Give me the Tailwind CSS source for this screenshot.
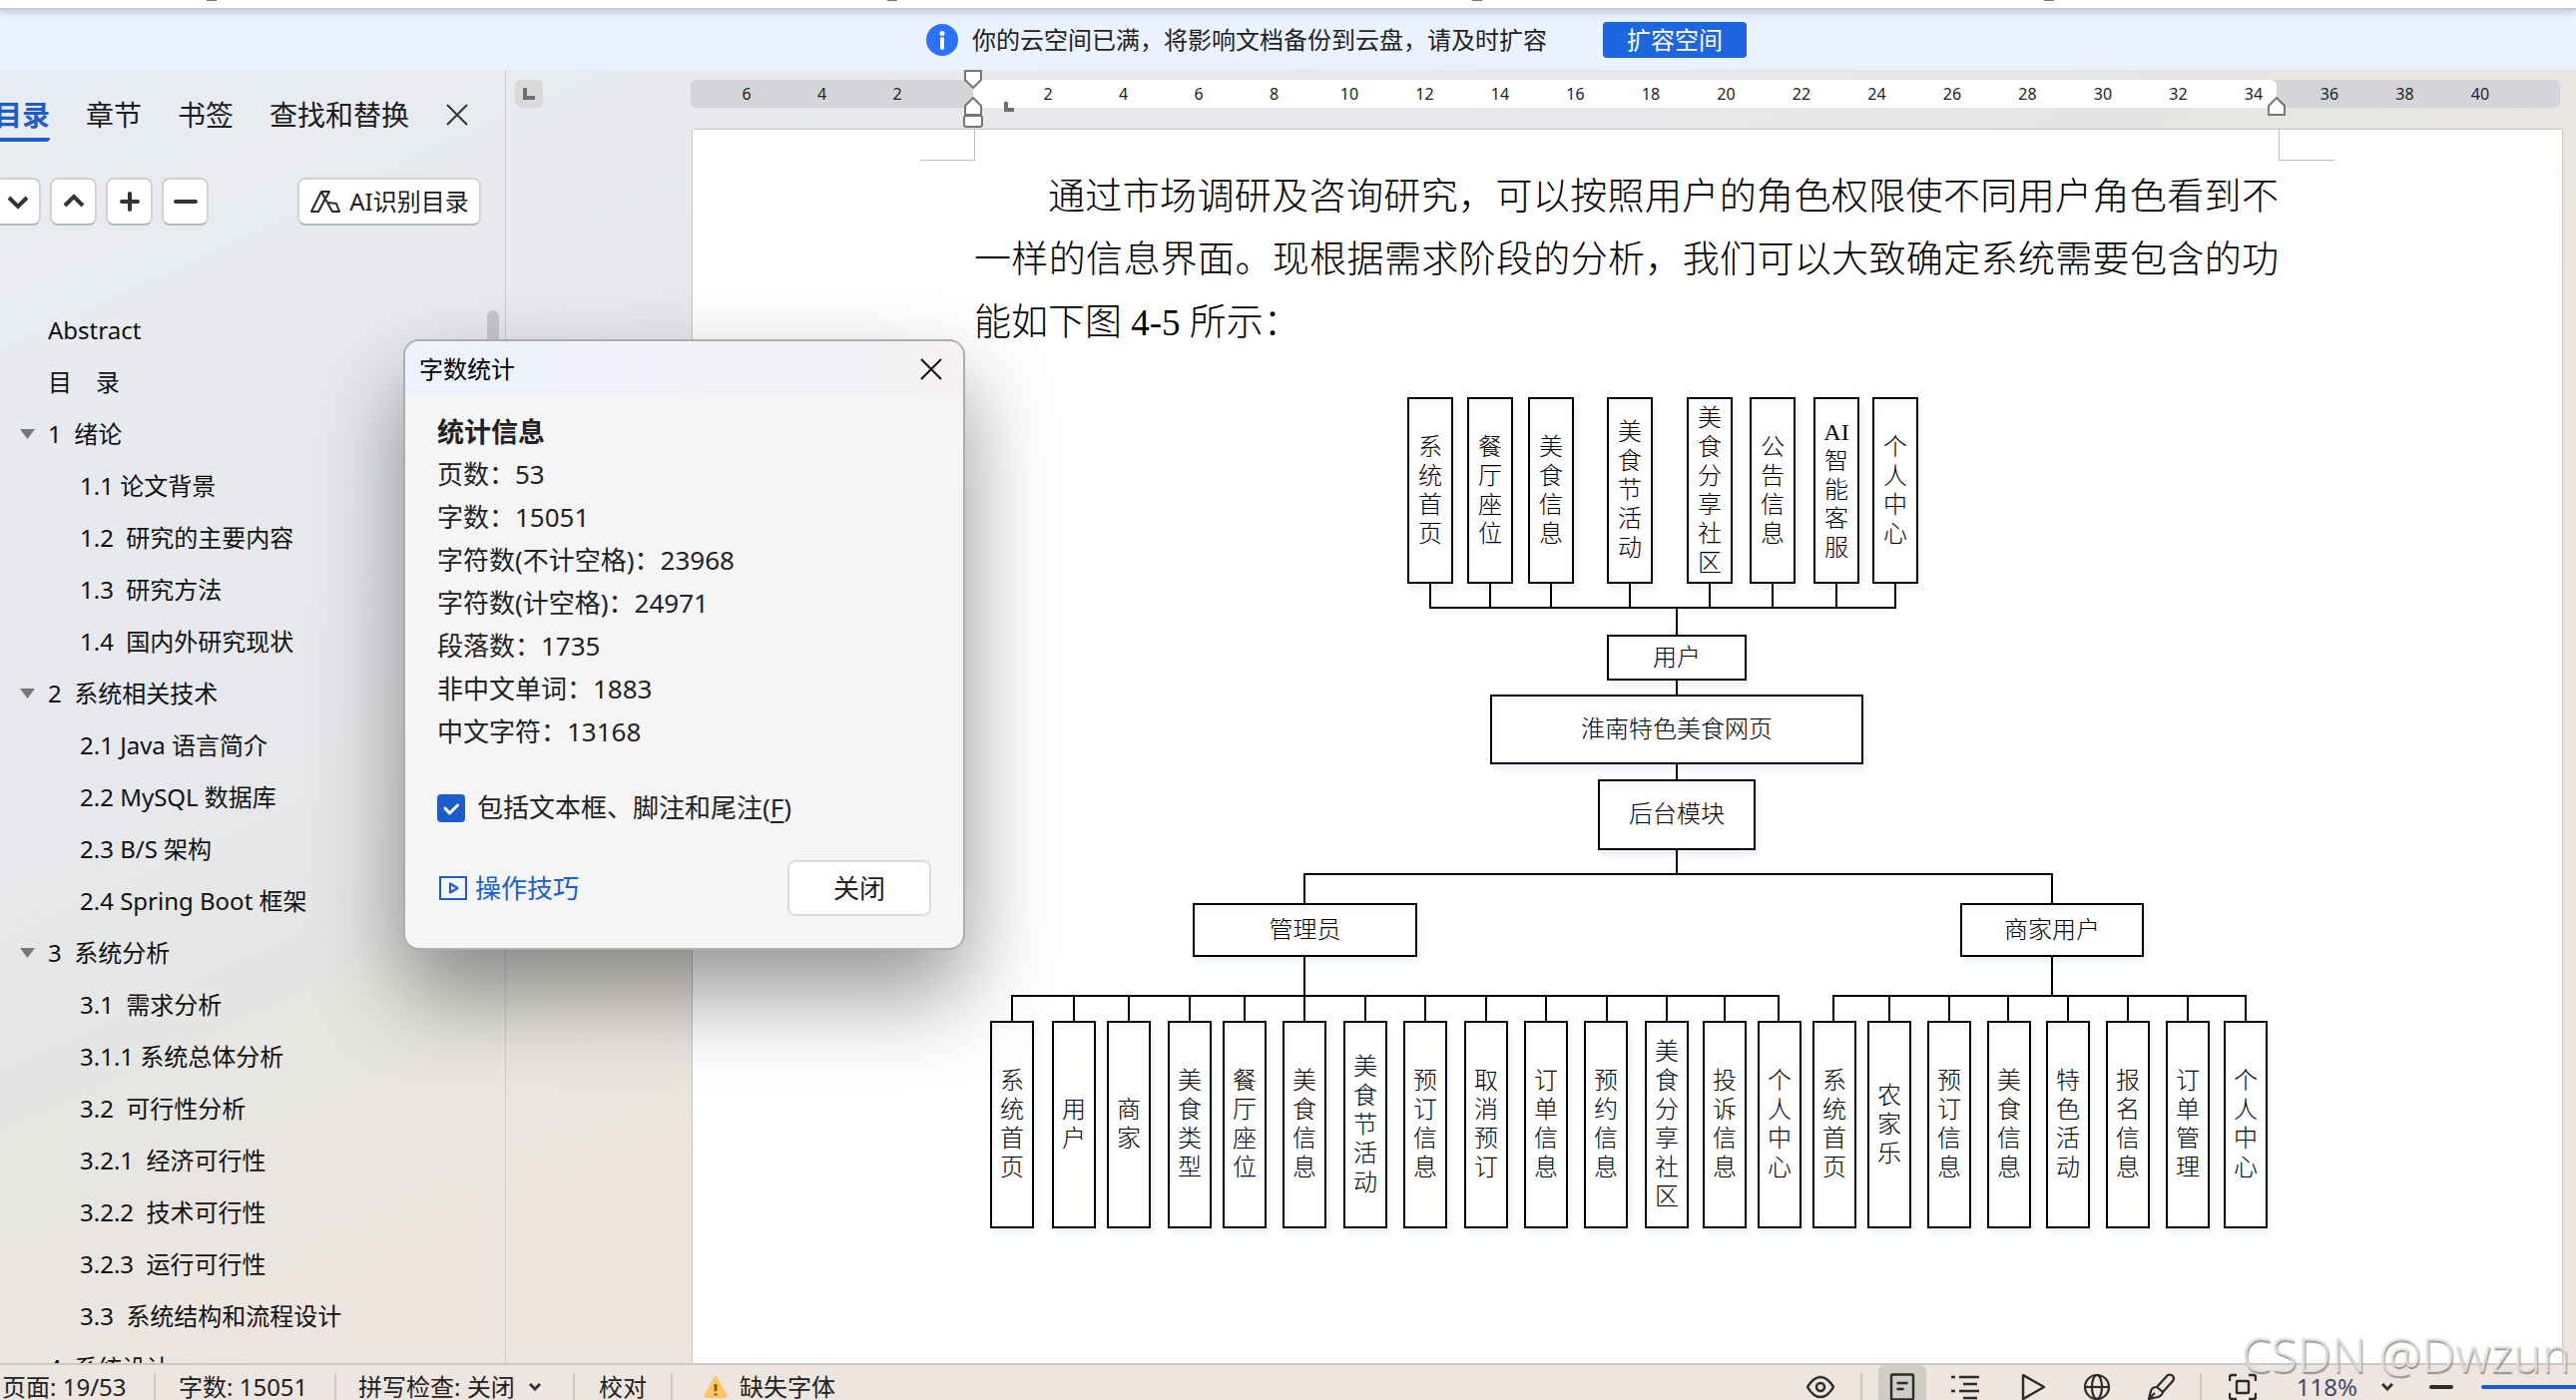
<!DOCTYPE html>
<html lang="zh-CN">
<head>
    <meta charset="UTF-8">
    <meta name="viewport" content="width=device-width, initial-scale=1.0">
    <title>字数统计</title>
    <script src="https://cdn.jsdelivr.net/npm/@tailwindcss/browser@4"></script>
</head>
<body class="font-['Noto_Sans','Noto_Sans_CJK_SC',sans-serif] text-2xl text-[#1c1c1e]">
    <div class="relative flex h-screen flex-col overflow-hidden bg-[linear-gradient(155deg,#e9ecf2_0%,#e6e8eb_33%,#e5e6e3_43%,#ede5df_57%,#eee5df_100%)]">

        <!-- Bottom edge of the ribbon -->
        <div class="z-10 flex h-[10px] shrink-0 items-start border-b-2 border-[#c9cbcf] bg-white pl-[207px] shadow-[0_2px_8px_rgba(80,100,140,0.3)]">
            <span class="h-px w-[10px] bg-[#777]"></span>
            <span class="ml-[672px] h-px w-[10px] bg-[#777]"></span>
            <span class="ml-[576px] h-px w-[10px] bg-[#777]"></span>
            <span class="ml-[563px] h-px w-[10px] bg-[#777]"></span>
        </div>

        <!-- Cloud notice -->
        <div class="flex h-[60px] shrink-0 items-center justify-center bg-[#ebf2ff] pl-[97px] text-[#222]">
            <svg class="size-8" viewBox="0 0 32 32">
                <circle cx="16" cy="16" r="16" fill="#2b72fb"/>
                <circle cx="16" cy="9.500" r="2.500" fill="#fff"/>
                <path d="M16 15v9" stroke="#fff" stroke-width="4" stroke-linecap="round"/>
            </svg>
            <p class="ml-[14px]">你的云空间已满，将影响文档备份到云盘，请及时扩容</p>
            <button type="button" class="ml-14 h-9 w-36 rounded bg-[#1e66e0] leading-9 text-white">扩容空间</button>
        </div>

        <main class="flex min-h-0 flex-1">
            <!-- Outline panel -->
            <aside class="relative flex w-[507px] shrink-0 flex-col overflow-hidden border-r border-[#cbcdd1]">
                <nav class="mt-6 -ml-[6px] flex items-start gap-9 text-[28px] leading-[42px]">
                    <a href="#toc" class="rounded-b-sm border-b-4 border-[#1d5dcb] pb-[2px] font-bold text-[#1d5dcb]">目录</a>
                    <a href="#chapter">章节</a>
                    <a href="#bookmark">书签</a>
                    <a href="#find">查找和替换</a>
                    <button type="button" aria-label="关闭目录" class="flex h-[42px] items-center">
                        <svg class="size-6" viewBox="0 0 24 24" fill="none" stroke="#333" stroke-width="2"><path d="M2 2l20 20M22 2L2 22"/></svg>
                    </button>
                </nav>

                <div class="mt-9 mr-6 -ml-[6px] flex gap-[9px]">
                    <button type="button" aria-label="展开" class="flex h-12 w-[47px] items-center justify-center rounded-lg border-2 border-[#d0d2d6] border-b-[#b4b6b9] bg-white">
                        <svg class="size-6" viewBox="0 0 24 24" fill="none" stroke="#333" stroke-width="4"><path d="M3 8l9 9 9-9"/></svg>
                    </button>
                    <button type="button" aria-label="收起" class="flex h-12 w-[47px] items-center justify-center rounded-lg border-2 border-[#d0d2d6] border-b-[#b4b6b9] bg-white">
                        <svg class="size-6" viewBox="0 0 24 24" fill="none" stroke="#333" stroke-width="4"><path d="M3 16l9-9 9 9"/></svg>
                    </button>
                    <button type="button" aria-label="增加级别" class="flex h-12 w-[47px] items-center justify-center rounded-lg border-2 border-[#d0d2d6] border-b-[#b4b6b9] bg-white">
                        <svg class="size-6" viewBox="0 0 24 24" fill="none" stroke="#333" stroke-width="4" stroke-linecap="round"><path d="M12 4v16M4 12h16"/></svg>
                    </button>
                    <button type="button" aria-label="减少级别" class="flex h-12 w-[47px] items-center justify-center rounded-lg border-2 border-[#d0d2d6] border-b-[#b4b6b9] bg-white">
                        <svg class="size-6" viewBox="0 0 24 24" fill="none" stroke="#333" stroke-width="4" stroke-linecap="round"><path d="M2 12h20"/></svg>
                    </button>
                    <button type="button" class="ml-auto flex h-12 w-[184px] items-center justify-center gap-2 rounded-lg border-2 border-[#d0d2d6] border-b-[#b4b6b9] bg-white whitespace-nowrap">
                        <svg class="h-6 w-8 shrink-0" viewBox="0 0 32 24" fill="none" stroke="#2a2a2a" stroke-width="2" stroke-linejoin="round"><path d="M12 2h8L9 22H2zM12 2l11 20h7l-3-8-8-1M14 12l6-10"/></svg>
                        AI识别目录
                    </button>
                </div>

                <ul class="mt-[79px] min-h-0 flex-1 overflow-hidden leading-[52px] text-[#111] *:whitespace-pre">
                    <li class="h-[52px] pl-12">Abstract</li>
                    <li class="h-[52px] pl-12">目　录</li>
                    <li class="flex h-[52px] items-center pl-5"><svg class="mr-[13px] h-[10px] w-[15px]" viewBox="0 0 15 10" fill="#777"><path d="M0 0h15L7.500 10z"/></svg>1  绪论</li>
                    <li class="h-[52px] pl-20">1.1 论文背景</li>
                    <li class="h-[52px] pl-20">1.2  研究的主要内容</li>
                    <li class="h-[52px] pl-20">1.3  研究方法</li>
                    <li class="h-[52px] pl-20">1.4  国内外研究现状</li>
                    <li class="flex h-[52px] items-center pl-5"><svg class="mr-[13px] h-[10px] w-[15px]" viewBox="0 0 15 10" fill="#777"><path d="M0 0h15L7.500 10z"/></svg>2  系统相关技术</li>
                    <li class="h-[52px] pl-20">2.1 Java 语言简介</li>
                    <li class="h-[52px] pl-20">2.2 MySQL 数据库</li>
                    <li class="h-[52px] pl-20">2.3 B/S 架构</li>
                    <li class="h-[52px] pl-20">2.4 Spring Boot 框架</li>
                    <li class="flex h-[52px] items-center pl-5"><svg class="mr-[13px] h-[10px] w-[15px]" viewBox="0 0 15 10" fill="#777"><path d="M0 0h15L7.500 10z"/></svg>3  系统分析</li>
                    <li class="h-[52px] pl-20">3.1  需求分析</li>
                    <li class="h-[52px] pl-20">3.1.1 系统总体分析</li>
                    <li class="h-[52px] pl-20">3.2  可行性分析</li>
                    <li class="h-[52px] pl-20">3.2.1  经济可行性</li>
                    <li class="h-[52px] pl-20">3.2.2  技术可行性</li>
                    <li class="h-[52px] pl-20">3.2.3  运行可行性</li>
                    <li class="h-[52px] pl-20">3.3  系统结构和流程设计</li>
                    <li class="flex h-[52px] items-center pl-5"><svg class="mr-[13px] h-[10px] w-[15px]" viewBox="0 0 15 10" fill="#777"><path d="M0 0h15L7.500 10z"/></svg>4  系统设计</li>
                </ul>
                <div class="absolute top-[241px] right-[6px] h-40 w-3 rounded-full bg-[#c5c7cb]"></div>
            </aside>

            <!-- Document area -->
            <section class="flex min-w-0 flex-1 flex-col">
                <div class="z-10 flex h-[60px] shrink-0 items-start pt-[10px] pr-4 pl-[9px] text-base leading-7">
                    <button type="button" aria-label="制表位" class="flex size-7 items-center justify-center rounded-md bg-[#dadadb]">
                        <svg class="size-3" viewBox="0 0 12 12" fill="none" stroke="#6f6f6f" stroke-width="4"><path d="M2 0v10h10"/></svg>
                    </button>
                    <div class="ml-[148px] flex flex-1 rounded-md bg-[#d3d5d8] text-center text-[#222]">
                        <div class="flex w-[283px] justify-between pr-[66px] pl-[46px]">
                            <span class="w-5">6</span><span class="w-5">4</span><span class="w-5">2</span>
                        </div>
                        <div class="relative flex flex-1 justify-between rounded-r-md bg-white pr-[13px] pl-[65px]">
                            <span class="w-5">2</span><span class="w-5">4</span><span class="w-5">6</span><span class="w-5">8</span>
                            <span class="w-5">10</span><span class="w-5">12</span><span class="w-5">14</span><span class="w-5">16</span>
                            <span class="w-5">18</span><span class="w-5">20</span><span class="w-5">22</span><span class="w-5">24</span>
                            <span class="w-5">26</span><span class="w-5">28</span><span class="w-5">30</span><span class="w-5">32</span><span class="w-5">34</span>
                            <!-- Indent markers -->
                            <svg class="absolute -top-[10px] -left-[10px] h-[60px] w-5" viewBox="0 0 20 60" fill="#fff" stroke="#777" stroke-width="2" stroke-linejoin="round">
                                <path d="M2 1h16v9l-8 8-8-8zM10 28l8 8v9H2v-9z"/><rect x="1" y="46" width="18" height="11" rx="2"/>
                            </svg>
                            <svg class="absolute top-[22px] left-[31px] size-[10px]" viewBox="0 0 10 10" fill="none" stroke="#6f6f6f" stroke-width="4"><path d="M2 0v8h8"/></svg>
                            <svg class="absolute top-[16px] -right-[10px] h-5 w-5" viewBox="0 0 20 20" fill="#fff" stroke="#777" stroke-width="2" stroke-linejoin="round">
                                <path d="M10 2l8 8v9H2v-9z"/>
                            </svg>
                        </div>
                        <div class="flex w-[284px] justify-between pr-[70px] pl-[43px]">
                            <span class="w-5">36</span><span class="w-5">38</span><span class="w-5">40</span>
                        </div>
                    </div>
                </div>

                <article class="mr-[14px] ml-[187px] flex-1 overflow-hidden bg-white font-['Liberation_Serif','Noto_Sans_CJK_SC',serif] font-light text-black shadow-[0_0_2px_rgba(0,0,0,0.4)]">
                    <div class="flex h-[31px] justify-between px-[228px]">
                        <span class="w-[55px] border-r border-b border-[#c0c0c0]"></span>
                        <span class="w-[56px] border-b border-l border-[#c0c0c0]"></span>
                    </div>
                    <p class="pt-[5px] pr-[284px] pl-[282px] indent-[2em] text-[37px] leading-[63px] text-justify">通过市场调研及咨询研究，可以按照用户的角色权限使不同用户角色看到不一样的信息界面。现根据需求阶段的分析，我们可以大致确定系统需要包含的功能如下图 <span class="font-normal">4-5</span> 所示：</p>

                    <!-- Function structure diagram -->
                    <div class="relative mt-[43px] ml-[281px] h-[840px] w-[1306px] text-center leading-[29px] *:[div]:absolute *:[div]:flex *:[div]:items-center *:[div]:justify-center *:[div]:border-2 *:[div]:border-black *:[div]:bg-white *:[div]:shadow-[3px_6px_6px_#eef3fb,inset_2px_6px_6px_#f6f9fd]">
                        <!-- User functions -->
                        <div class="top-0 left-[435px] h-[187px] w-[46px]"><span class="w-[26px] break-all">系统首页</span></div>
                        <div class="top-0 left-[495px] h-[187px] w-[46px]"><span class="w-[26px] break-all">餐厅座位</span></div>
                        <div class="top-0 left-[556px] h-[187px] w-[46px]"><span class="w-[26px] break-all">美食信息</span></div>
                        <div class="top-0 left-[635px] h-[187px] w-[46px]"><span class="w-[26px] break-all">美食节活动</span></div>
                        <div class="top-0 left-[715px] h-[187px] w-[46px]"><span class="w-[26px] break-all">美食分享社区</span></div>
                        <div class="top-0 left-[778px] h-[187px] w-[46px]"><span class="w-[26px] break-all">公告信息</span></div>
                        <div class="top-0 left-[842px] h-[187px] w-[46px]"><span class="w-[26px] break-all"><span class="font-normal">AI</span>智能客服</span></div>
                        <div class="top-0 left-[901px] h-[187px] w-[46px]"><span class="w-[26px] break-all">个人中心</span></div>
                        <!-- Trunk -->
                        <div class="top-[238px] left-[635px] h-[46px] w-[140px]">用户</div>
                        <div class="top-[298px] left-[518px] h-[70px] w-[374px]">淮南特色美食网页</div>
                        <div class="top-[383px] left-[626px] h-[71px] w-[158px]">后台模块</div>
                        <div class="top-[507px] left-[220px] h-[54px] w-[225px]">管理员</div>
                        <div class="top-[507px] left-[989px] h-[54px] w-[184px]">商家用户</div>
                        <!-- Administrator functions -->
                        <div class="top-[625px] left-[17px] h-[208px] w-[44px]"><span class="w-[26px] break-all">系统首页</span></div>
                        <div class="top-[625px] left-[79px] h-[208px] w-[44px]"><span class="w-[26px] break-all">用户</span></div>
                        <div class="top-[625px] left-[134px] h-[208px] w-[44px]"><span class="w-[26px] break-all">商家</span></div>
                        <div class="top-[625px] left-[195px] h-[208px] w-[44px]"><span class="w-[26px] break-all">美食类型</span></div>
                        <div class="top-[625px] left-[250px] h-[208px] w-[44px]"><span class="w-[26px] break-all">餐厅座位</span></div>
                        <div class="top-[625px] left-[310px] h-[208px] w-[44px]"><span class="w-[26px] break-all">美食信息</span></div>
                        <div class="top-[625px] left-[371px] h-[208px] w-[44px]"><span class="w-[26px] break-all">美食节活动</span></div>
                        <div class="top-[625px] left-[431px] h-[208px] w-[44px]"><span class="w-[26px] break-all">预订信息</span></div>
                        <div class="top-[625px] left-[492px] h-[208px] w-[44px]"><span class="w-[26px] break-all">取消预订</span></div>
                        <div class="top-[625px] left-[552px] h-[208px] w-[44px]"><span class="w-[26px] break-all">订单信息</span></div>
                        <div class="top-[625px] left-[612px] h-[208px] w-[44px]"><span class="w-[26px] break-all">预约信息</span></div>
                        <div class="top-[625px] left-[673px] h-[208px] w-[44px]"><span class="w-[26px] break-all">美食分享社区</span></div>
                        <div class="top-[625px] left-[731px] h-[208px] w-[44px]"><span class="w-[26px] break-all">投诉信息</span></div>
                        <div class="top-[625px] left-[786px] h-[208px] w-[44px]"><span class="w-[26px] break-all">个人中心</span></div>
                        <!-- Merchant functions -->
                        <div class="top-[625px] left-[841px] h-[208px] w-[44px]"><span class="w-[26px] break-all">系统首页</span></div>
                        <div class="top-[625px] left-[896px] h-[208px] w-[44px]"><span class="w-[26px] break-all">农家乐</span></div>
                        <div class="top-[625px] left-[956px] h-[208px] w-[44px]"><span class="w-[26px] break-all">预订信息</span></div>
                        <div class="top-[625px] left-[1016px] h-[208px] w-[44px]"><span class="w-[26px] break-all">美食信息</span></div>
                        <div class="top-[625px] left-[1075px] h-[208px] w-[44px]"><span class="w-[26px] break-all">特色活动</span></div>
                        <div class="top-[625px] left-[1135px] h-[208px] w-[44px]"><span class="w-[26px] break-all">报名信息</span></div>
                        <div class="top-[625px] left-[1195px] h-[208px] w-[44px]"><span class="w-[26px] break-all">订单管理</span></div>
                        <div class="top-[625px] left-[1253px] h-[208px] w-[44px]"><span class="w-[26px] break-all">个人中心</span></div>
                        <!-- Connectors -->
                        <svg class="absolute inset-0 size-full" viewBox="0 0 1306 840" fill="none" stroke="#000" stroke-width="2">
                            <path d="M458 186v25h466v-25M518 186v25M579 186v25M658 186v25M738 186v25M801 186v25M865 186v25M705 211v28M705 283v17M705 368v17M705 453v25"/>
                            <path d="M332 508v-30h749v30M332 560v66M1081 560v40"/>
                            <path d="M39 626v-26h768v26M101 600v26M156 600v26M217 600v26M272 600v26M393 600v26M453 600v26M514 600v26M574 600v26M635 600v26M695 600v26M753 600v26"/>
                            <path d="M862 626v-26h413v26M918 600v26M978 600v26M1037 600v26M1097 600v26M1157 600v26M1217 600v26"/>
                        </svg>
                    </div>
                </article>
            </section>
        </main>

        <!-- Status bar -->
        <footer class="flex h-[37px] shrink-0 items-start overflow-hidden border-t-2 border-[#cdc8c3] whitespace-nowrap text-[#222]">
            <div class="flex h-11 shrink-0 items-center">
                <span class="w-[154px] pl-[2px]">页面: 19/53</span>
                <span class="h-7 w-[2px] bg-[#cac9c6]"></span>
                <span class="w-[179px] pl-[23px]">字数: 15051</span>
                <span class="h-7 w-[2px] bg-[#cac9c6]"></span>
                <button type="button" class="flex w-[237px] items-center pl-[22px]">拼写检查: 关闭
                    <svg class="ml-[14px] size-3" viewBox="0 0 12 12" fill="none" stroke="#333" stroke-width="3"><path d="M1 3l5 5 5-5"/></svg>
                </button>
                <span class="h-7 w-[2px] bg-[#cac9c6]"></span>
                <span class="w-[96px] pl-6">校对</span>
                <span class="h-7 w-[2px] bg-[#cac9c6]"></span>
                <button type="button" class="flex items-center gap-3 pl-[31px]">
                    <svg class="h-[22px] w-6" viewBox="0 0 24 22"><path d="M12 0q1 0 2 2l9.500 17q1 3-2 3H2.500q-3 0-2-3L10 2q1-2 2-2z" fill="#fbc562"/><path d="M12 8v7M12 17.500v2" stroke="#8a5a05" stroke-width="3"/></svg>
                    缺失字体
                </button>
            </div>
            <div class="ml-auto flex h-11 shrink-0 items-center">
                <button type="button" aria-label="护眼模式" class="w-7">
                    <svg class="size-7" viewBox="0 0 28 28" fill="none" stroke="#2b2b2b" stroke-width="2.400"><path d="M1 14Q7 4 14 4t13 10q-6 10-13 10T1 14z"/><circle cx="14" cy="14" r="4"/></svg>
                </button>
                <span class="ml-[26px] h-7 w-[2px] bg-[#cac9c6]"></span>
                <button type="button" aria-label="页面视图" class="ml-4 flex h-11 w-12 items-center justify-center rounded-t-md bg-[#d0cdc6]">
                    <svg class="size-7" viewBox="0 0 28 28" fill="none" stroke="#2b2b2b" stroke-width="2.400"><rect x="3" y="1.500" width="22" height="25" rx="1"/><path d="M8.500 10h11M8.500 16h7"/></svg>
                </button>
                <button type="button" aria-label="大纲视图" class="ml-[25px] w-7">
                    <svg class="size-7" viewBox="0 0 28 28" fill="none" stroke="#2b2b2b" stroke-width="2.400"><path d="M8 4h20M12 11h14M8 18h20M12 25h14M0 4h4M0 18h4"/></svg>
                </button>
                <button type="button" aria-label="阅读视图" class="ml-[42px] w-7">
                    <svg class="size-7" viewBox="0 0 28 28" fill="none" stroke="#2b2b2b" stroke-width="2.400" stroke-linejoin="round"><path d="M2 2v24l21-12z"/></svg>
                </button>
                <button type="button" aria-label="Web 视图" class="ml-[34px] w-7">
                    <svg class="size-7" viewBox="0 0 28 28" fill="none" stroke="#2b2b2b" stroke-width="2.200"><circle cx="14" cy="14" r="12"/><ellipse cx="14" cy="14" rx="5" ry="12"/><path d="M2 14h24"/></svg>
                </button>
                <button type="button" aria-label="写作模式" class="ml-9 w-7">
                    <svg class="size-7" viewBox="0 0 28 28" fill="none" stroke="#2b2b2b" stroke-width="2.200" stroke-linejoin="round"><path d="M10 14L21 2q3-1 5 1t0 5L16 19zM10 14q-5 0-6 4L2 26l9-2q4-1 5-5zM2 26l6-6"/></svg>
                </button>
                <span class="ml-[25px] h-7 w-[2px] bg-[#cac9c6]"></span>
                <button type="button" aria-label="适合页面" class="ml-[27px] w-7">
                    <svg class="size-7" viewBox="0 0 28 28" fill="none" stroke="#2b2b2b" stroke-width="2.400"><path d="M1 8V4q0-2 2-2h5M20 2h5q2 0 2 2v4M27 20v4q0 2-2 2h-5M8 26H3q-2 0-2-2v-4"/><rect x="8" y="8" width="12" height="12" rx="1"/></svg>
                </button>
                <button type="button" class="ml-10 flex items-center text-[#414a68]">118%
                    <svg class="ml-6 size-3" viewBox="0 0 12 12" fill="none" stroke="#333" stroke-width="3"><path d="M1 3l5 5 5-5"/></svg>
                </button>
                <button type="button" aria-label="缩小" class="ml-9 h-1 w-6 rounded-full bg-[#2b2b2b]"></button>
                <div class="ml-7 h-1 w-[95px] rounded-l-full bg-[#1d5dcb]"></div>
            </div>
        </footer>

        <!-- Watermark -->
        <div class="absolute right-[6px] bottom-5 z-20 font-['Noto_Sans',sans-serif] text-[48px] leading-[52px] font-light text-[#e3e3e3]/90 text-shadow-[1px_2px_1px_rgba(110,110,110,0.7)]">CSDN @Dwzun</div>

        <!-- Word count dialog -->
        <section role="dialog" aria-labelledby="dlgTitle" class="absolute top-[340px] left-[404px] z-30 w-[563px] overflow-hidden rounded-2xl border-2 border-[#adadad] bg-[#f5f5f5] text-[26px] text-[#222] shadow-[0_44px_90px_rgba(0,0,0,0.42)]">
            <header class="flex h-[55px] items-center justify-between bg-gradient-to-r from-[#eef2fc] to-[#f5f1f4] pr-5 pl-[14px]">
                <h2 id="dlgTitle" class="text-2xl text-black">字数统计</h2>
                <button type="button" aria-label="关闭窗口">
                    <svg class="size-6" viewBox="0 0 24 24" fill="none" stroke="#111" stroke-width="2"><path d="M2 2l20 20M22 2L2 22"/></svg>
                </button>
            </header>
            <div class="px-8 pt-[14px] pb-8">
                <h3 class="text-[27px] leading-[43px] font-bold">统计信息</h3>
                <ul class="leading-[43px]">
                    <li>页数：53</li>
                    <li>字数：15051</li>
                    <li>字符数(不计空格)：23968</li>
                    <li>字符数(计空格)：24971</li>
                    <li>段落数：1735</li>
                    <li>非中文单词：1883</li>
                    <li>中文字符：13168</li>
                </ul>
                <label for="incNotes" class="mt-[33px] flex h-[43px] items-center gap-3">
                    <span class="relative flex size-7">
                        <input type="checkbox" id="incNotes" checked class="size-7 appearance-none rounded bg-[#1d5dcb]">
                        <svg class="pointer-events-none absolute inset-0 size-7" viewBox="0 0 28 28" fill="none" stroke="#fff" stroke-width="3" stroke-linecap="round" stroke-linejoin="round"><path d="M8 14l4.500 5 8-8"/></svg>
                    </span>
                    <span>包括文本框、脚注和尾注(<u class="underline-offset-4">F</u>)</span>
                </label>
                <div class="mt-[31px] flex items-center justify-between">
                    <a href="#tips" class="flex items-center gap-2 pl-[2px] text-[#1a5fd0]">
                        <svg class="h-6 w-7" viewBox="0 0 28 24" fill="none" stroke="#1d5dcb" stroke-width="2.200" stroke-linejoin="round"><rect x="1" y="1" width="26" height="22"/><path d="M11 7.500v9l7.500-4.500z"/></svg>
                        操作技巧
                    </a>
                    <button type="button" class="h-14 w-36 rounded-lg border-2 border-[#dbdbdb] bg-white">关闭</button>
                </div>
            </div>
        </section>
    </div>
</body>
</html>
